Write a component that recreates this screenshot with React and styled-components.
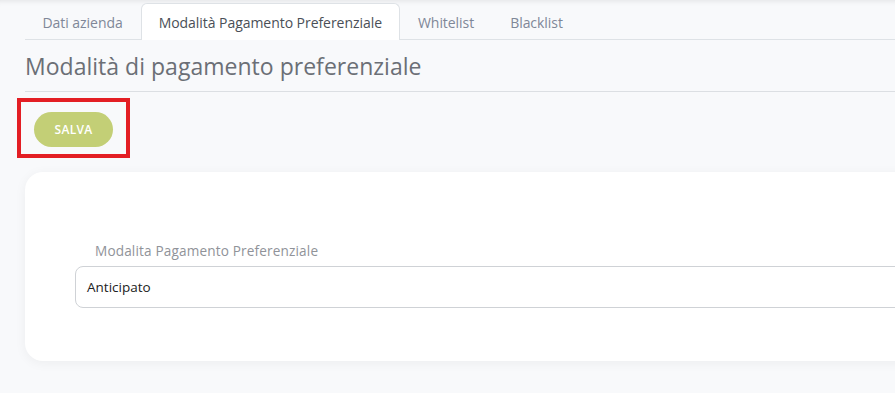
import React from "react";
import styled, { createGlobalStyle } from "styled-components";

const Global = createGlobalStyle`
  html, body { margin: 0; padding: 0; background: #f8f9fb; }
  body { font-family: "Open Sans", "Noto Sans", sans-serif; overflow: hidden; }
  * { box-sizing: border-box; }
`;

const Page = styled.div`
  width: 895px;
  height: 393px;
  overflow: hidden;
  position: relative;
  background: #f8f9fb;
  box-shadow: inset 0 6px 6px -6px rgba(0,0,0,0.12);
  padding: 3px 0 0 25px;
`;

const Tabs = styled.div`
  display: flex;
  border-bottom: 1px solid #dee2e6;
  height: 37px;
`;

const Tab = styled.div`
  padding: 0 17.5px 0 16.5px;
  display: flex;
  align-items: center;
  font-size: 14px;
  color: ${p => (p.$active ? "#4a4f57" : "#7f8798")};
  background: ${p => (p.$active ? "#fff" : "transparent")};
  border: 1px solid ${p => (p.$active ? "#dee2e6" : "transparent")};
  border-bottom: none;
  border-radius: 6px 6px 0 0;
  margin-bottom: -1px;
  letter-spacing: -0.05px;
`;

const Title = styled.h1`
  margin: 0;
  font-weight: 400;
  font-size: 23px;
  color: #6b6f76;
  height: 52px;
  display: flex;
  align-items: center;
  border-bottom: 1px solid #dcdfe3;
  letter-spacing: 0.02px;
`;

const Highlight = styled.div`
  margin: 6px 0 0 -8px;
  width: 113px;
  height: 60px;
  border: 4px solid #e31e24;
  padding: 10px 0 0 13px;
`;

const SaveButton = styled.button`
  width: 79px;
  height: 35px;
  border: none;
  border-radius: 18px;
  background: #c3cf76;
  color: #fff;
  font-family: inherit;
  font-weight: 600;
  font-size: 12px;
  letter-spacing: 0.3px;
`;

const Card = styled.div`
  margin-top: 14px;
  width: 900px;
  height: 189px;
  background: #fff;
  border-radius: 18px;
  box-shadow: 0 2px 12px rgba(0,0,0,0.05);
  padding: 69px 0 0 50px;
`;

const Label = styled.div`
  font-size: 13.6px;
  color: #909399;
  padding-left: 20px;
  margin-bottom: 6px;
  letter-spacing: 0.15px;
`;

const Input = styled.div`
  height: 42px;
  border: 1px solid #cfd2d6;
  border-radius: 8px;
  display: flex;
  align-items: center;
  padding-left: 11px;
  font-size: 13.5px;
  color: #222;
`;

export default function App() {
  return (
    <>
      <Global />
      <Page>
        <Tabs>
          <Tab>Dati azienda</Tab>
          <Tab $active>Modalità Pagamento Preferenziale</Tab>
          <Tab>Whitelist</Tab>
          <Tab>Blacklist</Tab>
        </Tabs>
        <Title>Modalità di pagamento preferenziale</Title>
        <Highlight>
          <SaveButton>SALVA</SaveButton>
        </Highlight>
        <Card>
          <Label>Modalita Pagamento Preferenziale</Label>
          <Input>Anticipato</Input>
        </Card>
      </Page>
    </>
  );
}
